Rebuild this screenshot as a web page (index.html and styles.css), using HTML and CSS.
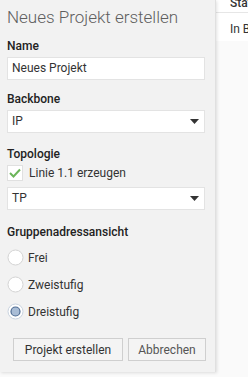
FILE: index.html
```html
<!DOCTYPE html>
<html>
<head>
    <link rel="stylesheet" href="styles.css">
</head>
<body>
    <div class="screen">
        <div class="dialog">
            <h1 class="title">Neues Projekt erstellen</h1>

            <div class="label">Name</div>
            <div class="box">Neues Projekt</div>

            <div class="label">Backbone</div>
            <div class="box select">
                <span>IP</span>
                <svg width="9" height="5" viewBox="0 0 9 5"><path d="M0 0H9L4.5 5Z" fill="#333"/></svg>
            </div>

            <div class="label topo">Topologie</div>
            <div class="check">
                <span class="check-box">
                    <svg width="12" height="10" viewBox="0 0 12 10"><path d="M1 5L4.5 8.5L11 1.5" fill="none" stroke="#6cb55a" stroke-width="2"/></svg>
                </span>
                <span>Linie 1.1 erzeugen</span>
            </div>
            <div class="box select">
                <span>TP</span>
                <svg width="9" height="5" viewBox="0 0 9 5"><path d="M0 0H9L4.5 5Z" fill="#333"/></svg>
            </div>

            <div class="label group">Gruppenadressansicht</div>
            <div class="radio">
                <svg width="17" height="17" viewBox="0 0 17 17"><circle cx="8.5" cy="8.5" r="7.5" fill="#fff" stroke="#d4d4d4"/></svg>
                <span>Frei</span>
            </div>
            <div class="radio">
                <svg width="17" height="17" viewBox="0 0 17 17"><circle cx="8.5" cy="8.5" r="7.5" fill="#fff" stroke="#d4d4d4"/></svg>
                <span>Zweistufig</span>
            </div>
            <div class="radio">
                <svg width="17" height="17" viewBox="0 0 17 17"><circle cx="8.5" cy="8.5" r="7.5" fill="#fff" stroke="#c9d3df"/><circle cx="8.5" cy="8.5" r="4.5" fill="#a9bdd6" stroke="#4d6b92" stroke-width="1.2"/></svg>
                <span>Dreistufig</span>
            </div>

            <div class="actions">
                <button class="button primary">Projekt erstellen</button>
                <button class="button cancel">Abbrechen</button>
            </div>
        </div>

        <div class="table">
            <div class="table-head"><span>Status</span></div>
            <div class="table-row">In Bearbeitung</div>
        </div>
    </div>
</body>
</html>
```
FILE: styles.css
```css
body {
    margin: 0;
    background: #fafafa;
    font-family: Roboto, "Open Sans", sans-serif;
    color: #222;
}

.screen {
    display: flex;
    align-items: flex-start;
    height: 377px;
    overflow: hidden;
}

.dialog {
    width: 216px;
    box-sizing: border-box;
    flex: none;
    padding: 0 0 11px 7px;
    background: #f2f2f2;
    border-right: 1px solid #e0e0e0;
    box-shadow: 1px 1px 3px rgba(0, 0, 0, 0.12);
    position: relative;
    z-index: 1;
}

.title {
    margin: 6px 0 10px;
    font-size: 17px;
    font-weight: 300;
    line-height: 22px;
    color: #5e5e5e;
}

.label {
    font-size: 12px;
    font-weight: 500;
    line-height: 16px;
    margin: 11px 0 3px;
    color: #222;
}

.title + .label {
    margin-top: 10px;
}

.label.topo {
    margin: 13px 0 3px;
}

.label.group {
    margin-top: 14px;
}

.box {
    width: 198px;
    height: 23px;
    box-sizing: border-box;
    background: #fff;
    border: 1px solid #e3e3e3;
    font-size: 12px;
    line-height: 21px;
    padding: 0 5px 0 4px;
    color: #333;
}

.select {
    display: flex;
    align-items: center;
    justify-content: space-between;
}

.check {
    display: flex;
    align-items: center;
    gap: 6px;
    font-size: 12px;
    color: #333;
    height: 16px;
    margin: 3px 0 6px;
}

.check-box {
    width: 16px;
    height: 16px;
    box-sizing: border-box;
    background: #fff;
    border: 1px solid #e0e0e0;
    display: flex;
    align-items: center;
    justify-content: center;
}

.radio {
    display: flex;
    align-items: center;
    gap: 4px;
    font-size: 12px;
    color: #333;
    height: 17px;
    margin-top: 10px;
}

.label + .radio {
    margin-top: 9px;
}

.actions {
    display: flex;
    gap: 5px;
    margin: 18px 0 0 6px;
}

.button {
    font-family: inherit;
    font-size: 12px;
    color: #333;
    background: #f4f4f4;
    border: 1px solid #cfcfcf;
    height: 23px;
    padding: 0;
}

.primary {
    width: 110px;
}

.cancel {
    width: 78px;
    color: #555;
}

.table {
    flex: 1;
    min-width: 0;
    font-size: 12px;
    color: #333;
    white-space: nowrap;
    overflow: hidden;
}

.table-head {
    height: 12px;
    padding-left: 14px;
    border-bottom: 1px solid #e6e6e6;
    font-weight: 500;
    background: #fff;
    overflow: hidden;
}

.table-head span {
    display: block;
    line-height: 12px;
    margin-top: -3px;
}

.table-row {
    height: 28px;
    line-height: 32px;
    padding-left: 14px;
    background: #fff;
}
```
